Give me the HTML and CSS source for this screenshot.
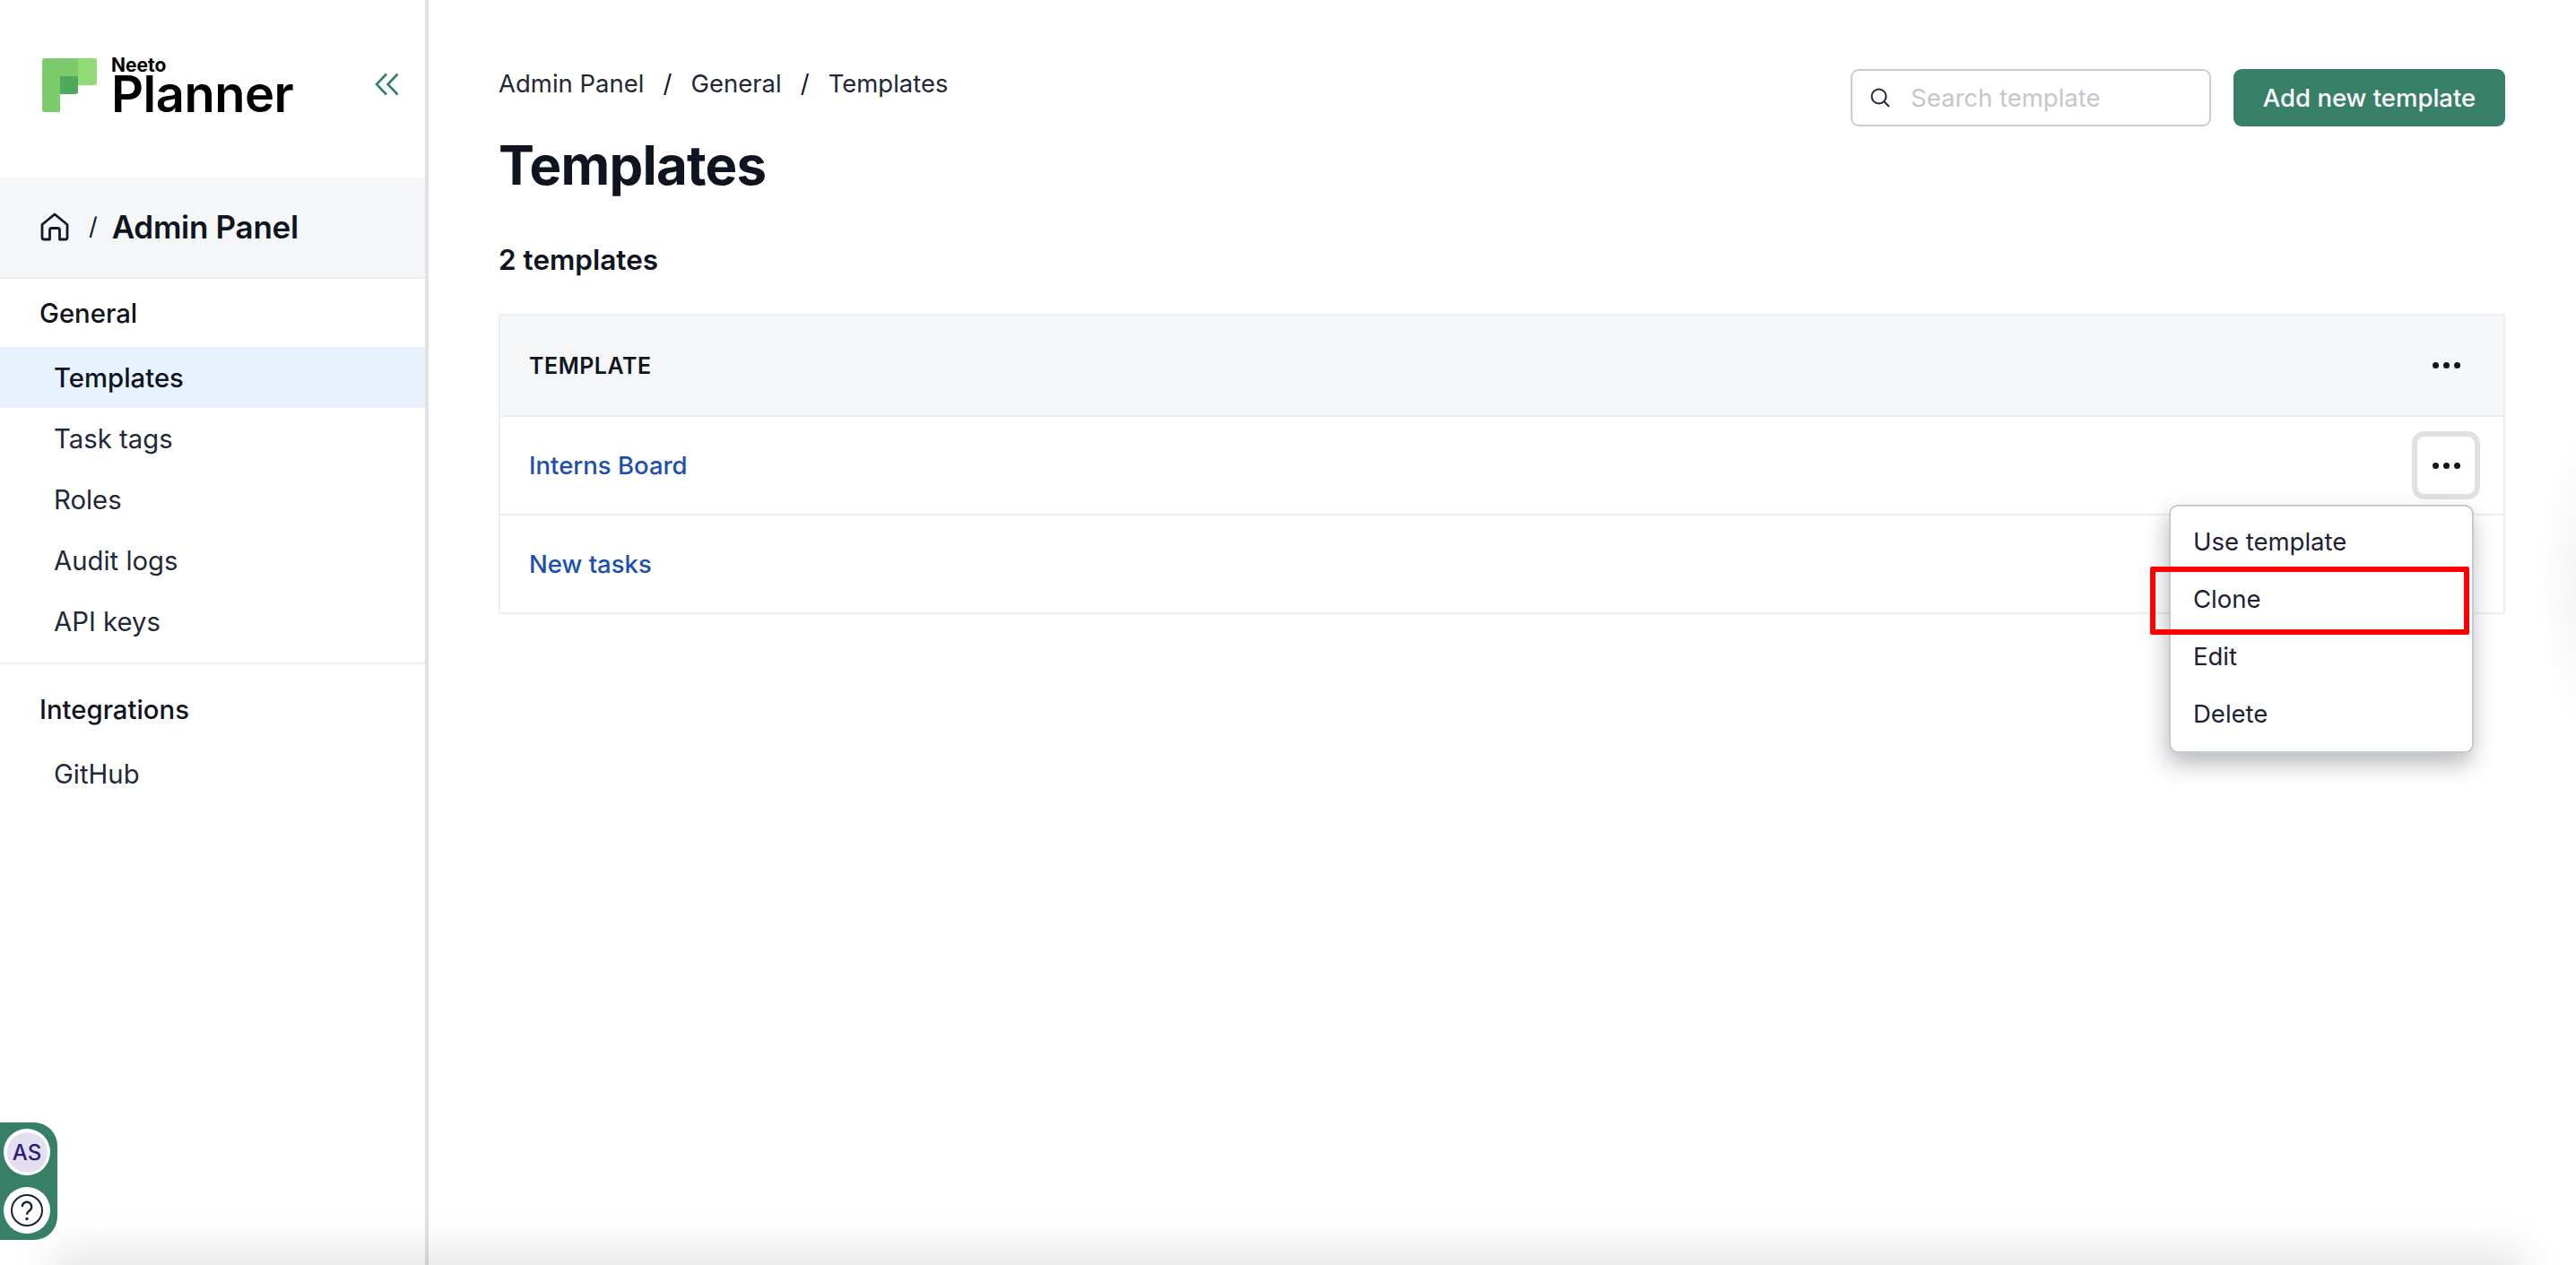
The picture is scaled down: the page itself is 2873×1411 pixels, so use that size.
FILE: index.html
```html
<!DOCTYPE html>
<html lang="en">
<head>
  <meta charset="UTF-8" />
  <title>Templates</title>
  <link rel="stylesheet" href="styles.css">
</head>
<body>
  <div class="app">
    <aside class="sidebar">
      <div class="brand">
        <svg class="brand-mark" viewBox="0 0 61 60" width="61" height="60">
          <path d="M3 0H20V60H3a3 3 0 0 1-3-3V3a3 3 0 0 1 3-3z" fill="#7ccb6c"/>
          <rect x="20" width="20" height="20" fill="#7cca6b"/>
          <path d="M40 0H58a3 3 0 0 1 3 3V27a3 3 0 0 1-3 3H40z" fill="#8fdb78"/>
          <path d="M20 20H40V37a3 3 0 0 1-3 3H20z" fill="#4fa95a"/>
        </svg>
        <div class="brand-name">
          <span class="brand-small">Neeto</span>
          <span class="brand-big">Planner</span>
        </div>
        <svg class="collapse" viewBox="0 0 27 26" width="27" height="26" fill="none" stroke="#387f68" stroke-width="2.6">
          <path d="M13 1.5L2 13l11 11.5"/>
          <path d="M25.5 1.5L14.5 13l11 11.5"/>
        </svg>
      </div>

      <div class="panel-head">
        <svg class="home" viewBox="0 0 32 32" width="32" height="32" fill="none" stroke="#111827" stroke-width="2.8" stroke-linejoin="round">
          <path d="M2 13.5L16 2l14 11.5V28a2 2 0 0 1-2 2h-6.500V19.500a2 2 0 0 0-2-2h-7a2 2 0 0 0-2 2V30H4a2 2 0 0 1-2-2z"/>
        </svg>
        <span class="panel-slash">/</span>
        <span class="panel-title">Admin Panel</span>
      </div>

      <nav class="nav-section">
        <div class="nav-heading">General</div>
        <a class="nav-item active">Templates</a>
        <a class="nav-item">Task tags</a>
        <a class="nav-item">Roles</a>
        <a class="nav-item">Audit logs</a>
        <a class="nav-item">API keys</a>
      </nav>
      <nav class="nav-section second">
        <div class="nav-heading">Integrations</div>
        <a class="nav-item">GitHub</a>
      </nav>
    </aside>

    <main class="content">
      <header class="top">
        <div>
          <div class="breadcrumb">
            <span>Admin Panel</span>
            <i>/</i>
            <span>General</span>
            <i>/</i>
            <span>Templates</span>
          </div>
          <h1>Templates</h1>
        </div>
        <div class="actions">
          <label class="search">
            <svg viewBox="0 0 22 22" width="22" height="22" fill="none" stroke="#1f2937" stroke-width="2">
              <circle cx="9.500" cy="9.500" r="8"/>
              <path d="M15.500 15.500L21 21"/>
            </svg>
            <input type="text" placeholder="Search template">
          </label>
          <button class="btn-primary">Add new template</button>
        </div>
      </header>

      <h2 class="count">2 templates</h2>

      <div class="table">
        <div class="row head">
          <span class="col-title">Template</span>
          <span class="dots-btn">
            <b></b><b></b><b></b>
          </span>
        </div>
        <div class="row">
          <a class="link">Interns Board</a>
          <span class="dots-btn focused">
            <b></b><b></b><b></b>
          </span>
        </div>
        <div class="row">
          <a class="link">New tasks</a>
        </div>

        <ul class="menu">
          <li>Use template</li>
          <li>Clone</li>
          <li>Edit</li>
          <li>Delete</li>
        </ul>
        <div class="highlight"></div>
      </div>
    </main>
  </div>

  <div class="widget">
    <span class="widget-btn"><span class="avatar">AS</span></span>
    <span class="widget-btn">
      <svg viewBox="0 0 36 36" width="36" height="36" fill="none" stroke="#1a2233" stroke-width="2">
        <circle cx="18" cy="18" r="17"/>
        <path d="M12.800 14a5.200 5.200 0 1 1 8.200 4.200c-1.900 1.400-3 2.400-3 4.600" stroke-width="2.400"/>
        <circle cx="18" cy="27.500" r="1.700" fill="#1a2233" stroke="none"/>
      </svg>
    </span>
  </div>

  <div class="edge-right"></div>
  <div class="edge-bottom"></div>
</body>
</html>
```

FILE: styles.css
```css
* { box-sizing: border-box; }

body {
  margin: 0;
  height: 1411px;
  overflow: hidden;
  background: #fff;
  font-family: 'Inter', 'Liberation Sans', sans-serif;
  font-size: 27.5px;
  color: #1f2937;
}

.app {
  display: flex;
  height: 100%;
}

/* Sidebar */
.sidebar {
  width: 478px;
  flex-shrink: 0;
  border-right: 4px solid #dfe1e4;
}

.brand {
  height: 198px;
  padding: 65px 29px 0 47px;
  display: flex;
  align-items: flex-start;
}

.brand-name {
  margin-left: 16px;
  display: flex;
  flex-direction: column;
  color: #000;
}

.brand-small {
  font-size: 21px;
  line-height: 16px;
  font-weight: 700;
}

.brand-big {
  font-size: 56px;
  line-height: 44px;
  margin-top: 2px;
  font-weight: 600;
  letter-spacing: -0.5px;
}

.collapse {
  margin-left: auto;
  margin-top: 16px;
}

.panel-head {
  height: 113px;
  padding: 0 45px 2px;
  background: #f5f6f8;
  border-bottom: 2px solid #eceef0;
  display: flex;
  align-items: center;
}

.panel-slash {
  margin: 0 16px 0 22px;
  font-size: 27px;
  color: #111827;
}

.panel-title {
  font-size: 35px;
  font-weight: 600;
  color: #0f1520;
  letter-spacing: -0.3px;
}

.nav-section.second {
  border-top: 2px solid #eceef0;
  margin-top: 12px;
  padding-top: 12px;
}

.nav-heading {
  height: 76px;
  padding-left: 44px;
  display: flex;
  align-items: center;
  font-size: 29.300px;
  font-weight: 500;
  color: #0f1520;
}

.nav-item {
  height: 68px;
  padding-left: 60px;
  display: flex;
  align-items: center;
  font-size: 29.300px;
  color: #1f2937;
}

.nav-item.active {
  background: #e7f2fd;
  color: #0f1520;
  font-weight: 500;
}

/* Main area */
.content {
  flex: 1;
  padding: 77px 79px 0 78px;
}

.top {
  display: flex;
  justify-content: space-between;
  align-items: flex-start;
}

.breadcrumb {
  display: flex;
  align-items: center;
  gap: 21px;
  line-height: 32px;
}

.breadcrumb i {
  font-style: normal;
  color: #111827;
}

h1 {
  margin: 37px 0 0;
  font-size: 60px;
  line-height: 76px;
  font-weight: 700;
  letter-spacing: -0.8px;
  color: #0f1520;
}

.actions {
  display: flex;
  gap: 25px;
}

.search {
  width: 402px;
  height: 64px;
  padding: 0 20px;
  border: 2px solid #c9cdd3;
  border-radius: 9px;
  display: flex;
  align-items: center;
  gap: 23px;
}

.search input {
  flex: 1;
  min-width: 0;
  border: 0;
  outline: 0;
  padding: 0;
  font: inherit;
  color: #1f2937;
}

.search input::placeholder {
  color: #c2c7ce;
}

.btn-primary {
  width: 303px;
  height: 64px;
  border: 0;
  border-radius: 9px;
  background: #387f68;
  color: #fff;
  font: inherit;
  font-weight: 500;
}

.count {
  margin: 47px 0 0;
  font-size: 31.500px;
  line-height: 42px;
  font-weight: 600;
  color: #0f1520;
}

.table {
  position: relative;
  margin-top: 39px;
  border: 2px solid #eceef0;
}

.row {
  height: 110px;
  padding: 0 26px 0 32px;
  border-top: 2px solid #eceef0;
  display: flex;
  align-items: center;
  justify-content: space-between;
}

.row.head {
  height: 111px;
  border-top: 0;
  background: #f5f6f8;
}

.col-title {
  font-size: 25px;
  font-weight: 600;
  text-transform: uppercase;
  letter-spacing: 0.5px;
  color: #0f1520;
}

.link {
  color: #1d4fae;
  font-weight: 500;
}

.dots-btn {
  width: 76px;
  height: 76px;
  border-radius: 14px;
  display: flex;
  align-items: center;
  justify-content: center;
  gap: 5px;
}

.dots-btn.focused {
  border: 6px solid #dfe1e4;
}

.dots-btn b {
  width: 7px;
  height: 7px;
  border-radius: 50%;
  background: #0f1520;
}

/* Row actions dropdown */
.menu {
  position: absolute;
  top: 211px;
  right: 33px;
  width: 340px;
  margin: 0;
  padding: 7px 0 10px;
  list-style: none;
  background: #fff;
  border: 2px solid #c5c9ce;
  border-radius: 10px;
  box-shadow: -2px 12px 26px rgba(30, 40, 50, 0.32);
}

.menu li {
  height: 64px;
  padding-left: 25px;
  display: flex;
  align-items: center;
  color: #1a2233;
}

.highlight {
  position: absolute;
  top: 280px;
  right: 38px;
  width: 356px;
  height: 76px;
  border: 6px solid #f00;
  border-radius: 2px;
}

/* Floating help widget */
.widget {
  position: fixed;
  left: 0;
  top: 1252px;
  width: 64px;
  height: 131px;
  padding: 7px 8px 7px 0;
  background: #387f68;
  border-radius: 0 26px 26px 0;
  display: flex;
  flex-direction: column;
  align-items: flex-end;
  justify-content: space-between;
}

.widget-btn {
  width: 52px;
  height: 52px;
  border-radius: 50%;
  background: #fff;
  display: flex;
  align-items: center;
  justify-content: center;
}

.avatar {
  width: 45px;
  height: 45px;
  border-radius: 50%;
  background: #e3dff0;
  color: #2a1a7a;
  font-size: 24px;
  font-weight: 500;
  display: flex;
  align-items: center;
  justify-content: center;
}

/* Faint window shadows at the screen edges */
.edge-right {
  position: fixed;
  top: 480px;
  right: -70px;
  width: 110px;
  height: 340px;
  border-radius: 50%;
  background: radial-gradient(closest-side, rgba(0, 0, 0, 0.05), rgba(0, 0, 0, 0));
  pointer-events: none;
}

.edge-bottom {
  position: fixed;
  left: 70px;
  right: 70px;
  bottom: -30px;
  height: 30px;
  box-shadow: 0 0 50px 12px rgba(0, 0, 0, 0.12);
  pointer-events: none;
}
```
